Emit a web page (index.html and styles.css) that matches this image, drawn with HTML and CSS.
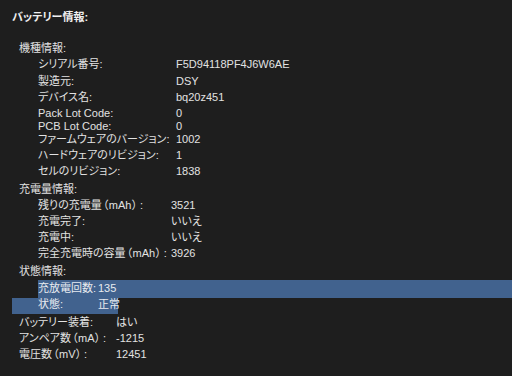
FILE: index.html
```html
<!DOCTYPE html>
<html lang="ja">
<head>
<meta charset="utf-8">
<title>バッテリー情報</title>
<link rel="stylesheet" href="styles.css">
</head>
<body>
<div class="panel">
  <div class="title">バッテリー情報:</div>

  <div class="section">機種情報:</div>
  <div class="group g1">
    <div class="row"><span class="k">シリアル番号:</span><span class="v">F5D94118PF4J6W6AE</span></div>
    <div class="row"><span class="k">製造元:</span><span class="v">DSY</span></div>
    <div class="row"><span class="k">デバイス名:</span><span class="v">bq20z451</span></div>
    <div class="row lh14"><span class="k">Pack Lot Code:</span><span class="v">0</span></div>
    <div class="row lh12"><span class="k">PCB Lot Code:</span><span class="v">0</span></div>
    <div class="row lh15"><span class="k">ファームウェアのバージョン:</span><span class="v">1002</span></div>
    <div class="row"><span class="k">ハードウェアのリビジョン:</span><span class="v">1</span></div>
    <div class="row"><span class="k">セルのリビジョン:</span><span class="v">1838</span></div>
  </div>

  <div class="section lh18">充電量情報:</div>
  <div class="group g2">
    <div class="row lh15"><span class="k">残りの充電量<span class="po">（</span>mAh<span class="pc">）</span>:</span><span class="v">3521</span></div>
    <div class="row lh16"><span class="k">充電完了:</span><span class="v">いいえ</span></div>
    <div class="row"><span class="k">充電中:</span><span class="v">いいえ</span></div>
    <div class="row lh175"><span class="k">完全充電時の容量<span class="po">（</span>mAh<span class="pc">）</span>:</span><span class="v">3926</span></div>
  </div>

  <div class="section lh17">状態情報:</div>
  <div class="group g3">
    <div class="row sel sel-first"><span class="k">充放電回数:</span><span class="v">135</span></div>
    <div class="row sel sel-last"><span class="k">状態:</span><span class="v">正常</span></div>
  </div>

  <div class="group g4">
    <div class="row lh16"><span class="k">バッテリー装着:</span><span class="v">はい</span></div>
    <div class="row lh16"><span class="k">アンペア数<span class="po">（</span>mA<span class="pc">）</span>:</span><span class="v">-1215</span></div>
    <div class="row lh16"><span class="k">電圧数<span class="po">（</span>mV<span class="pc">）</span>:</span><span class="v">12451</span></div>
  </div>
</div>
</body>
</html>
```

FILE: styles.css
```css
html, body {
  margin: 0;
  padding: 0;
  background: #1e1e1e;
}

body {
  width: 512px;
  height: 376px;
  overflow: hidden;
  font-family: "Liberation Sans", "Noto Sans CJK JP", sans-serif;
  font-size: 11px;
  color: #e2e2e2;
  font-feature-settings: "palt";
}

.panel {
  padding: 8.5px 0 0 12px;
}

.title {
  font-weight: bold;
  color: #f0f0f0;
  line-height: 16.5px;
}

.section {
  margin-left: 7px;
  line-height: 16.5px;
}

.title + .section {
  margin-top: 14.5px;
}

.row {
  display: grid;
  grid-template-columns: var(--key) auto;
  line-height: 16.5px;
  white-space: nowrap;
}

.po {
  margin: 0 0.5px 0 1px;
}

.pc {
  margin: 0 2.5px 0 0.5px;
}

.group .row {
  margin-left: 26px;
}

.g1 { --key: 138px; }
.g2 { --key: 133px; }
.g3 { --key: 60px; }
.g4 { --key: 97px; }

.g4 .row {
  margin-left: 7px;
}

.lh12 { line-height: 12px; }
.lh14 { line-height: 14px; }
.lh15 { line-height: 15px; }
.lh16 { line-height: 16px; }
.lh17 { line-height: 17px; }
.lh175 { line-height: 17.5px; }
.lh18 { line-height: 18px; }

.sel {
  background: #41628e;
  color: #e8ebf0;
}

.group .sel-first {
  line-height: 16px;
  padding-bottom: 2px;
}

.group .sel-last {
  margin-left: 0;
  padding-left: 26px;
  width: 80px;
  grid-template-columns: 60px auto;
  line-height: 12px;
  height: 16px;
}
```
